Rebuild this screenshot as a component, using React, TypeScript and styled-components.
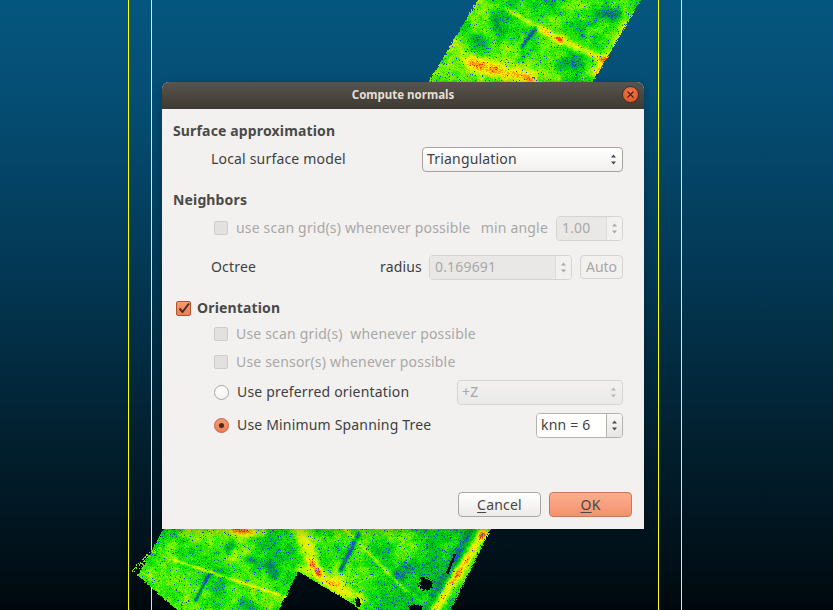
import React, { FC, useMemo } from 'react';
import styled, { createGlobalStyle } from 'styled-components';

const GlobalStyle = createGlobalStyle`
  html, body {
    margin: 0;
    padding: 0;
    height: 100%;
    overflow: hidden;
    background: #000a12;
  }
`;

const Viewport = styled.div`
  position: relative;
  width: 833px;
  height: 610px;
  overflow: hidden;
  background: linear-gradient(to bottom, #05567f 0%, #054d73 17%, #033550 48%, #02202f 72%, #011722 84%, #00080e 100%);
  font-family: 'Noto Sans', 'Open Sans', sans-serif;
  font-size: 14px;
  color: #3c3c3c;
`;

const Scene = styled.svg`
  position: absolute;
  inset: 0;
  display: block;
`;

// point cloud -----------------------------------------------------------------

type Pt = [number, number];
type Band = { a: Pt; b: Pt; w: number; amp: number };

const hash = (x: number, y: number) => {
  const s = Math.sin(x * 127.1 + y * 311.7) * 43758.5453;
  return s - Math.floor(s);
};

const smooth = (x: number, y: number) => {
  const ix = Math.floor(x);
  const iy = Math.floor(y);
  const fx = x - ix;
  const fy = y - iy;
  const u = fx * fx * (3 - 2 * fx);
  const v = fy * fy * (3 - 2 * fy);
  const top = hash(ix, iy) * (1 - u) + hash(ix + 1, iy) * u;
  const bottom = hash(ix, iy + 1) * (1 - u) + hash(ix + 1, iy + 1) * u;
  return top * (1 - v) + bottom * v;
};

const inside = (poly: Pt[], x: number, y: number) => {
  let hit = false;
  for (let i = 0, j = poly.length - 1; i < poly.length; j = i++) {
    const [xi, yi] = poly[i];
    const [xj, yj] = poly[j];
    if (yi > y !== yj > y && x < ((xj - xi) * (y - yi)) / (yj - yi) + xi) hit = !hit;
  }
  return hit;
};

const segDist = (x: number, y: number, a: Pt, b: Pt) => {
  const dx = b[0] - a[0];
  const dy = b[1] - a[1];
  const t = Math.max(0, Math.min(1, ((x - a[0]) * dx + (y - a[1]) * dy) / (dx * dx + dy * dy || 1)));
  return Math.hypot(x - a[0] - t * dx, y - a[1] - t * dy);
};

const palette = ['#1a4cc4', '#058a5a', '#04b030', '#00d414', '#2eea00', '#7cf200', '#c4f400', '#f4ee00', '#ffa400', '#ee4a10'];

const topPoly: Pt[] = [[477, 0], [640, 0], [592, 82], [428, 82]];
const bottomPoly: Pt[] = [
  [163, 529], [150, 552], [137, 575], [177, 610], [278, 610], [298, 571],
  [350, 602], [360, 610], [450, 610], [490, 529],
];

const bands: Band[] = [
  // top sheet
  { a: [505, 8], b: [560, 40], w: 3, amp: 0.24 },
  { a: [560, 40], b: [612, 62], w: 4, amp: 0.28 },
  { a: [470, 62], b: [530, 80], w: 7, amp: 0.32 },
  { a: [625, 28], b: [600, 70], w: 7, amp: 0.24 },
  { a: [475, 40], b: [480, 42], w: 6, amp: -0.22 },
  { a: [600, 14], b: [616, 15], w: 6, amp: -0.3 },
  { a: [522, 46], b: [535, 28], w: 2, amp: -0.35 },
  { a: [560, 64], b: [575, 60], w: 8, amp: -0.18 },
  { a: [495, 20], b: [500, 35], w: 5, amp: -0.18 },
  // bottom sheet
  { a: [482, 535], b: [433, 610], w: 5, amp: 0.42 },
  { a: [470, 530], b: [428, 610], w: 5, amp: -0.24 },
  { a: [312, 564], b: [318, 572], w: 5, amp: 0.46 },
  { a: [300, 568], b: [360, 598], w: 6, amp: 0.24 },
  { a: [300, 532], b: [310, 556], w: 8, amp: 0.26 },
  { a: [235, 529], b: [262, 532], w: 5, amp: 0.34 },
  { a: [175, 560], b: [295, 600], w: 1.6, amp: 0.22 },
  { a: [345, 529], b: [405, 590], w: 2, amp: 0.2 },
  { a: [230, 543], b: [228, 548], w: 6, amp: -0.24 },
  { a: [268, 566], b: [272, 574], w: 6, amp: -0.28 },
  { a: [248, 560], b: [254, 562], w: 5, amp: -0.2 },
  { a: [358, 534], b: [340, 570], w: 2.2, amp: -0.38 },
  { a: [208, 575], b: [195, 600], w: 1.6, amp: -0.38 },
  { a: [245, 602], b: [250, 606], w: 6, amp: -0.28 },
  { a: [412, 560], b: [400, 575], w: 9, amp: -0.16 },
];

const holes: Band[] = [
  { a: [424, 583], b: [426, 584], w: 6, amp: 1 },
  { a: [357, 600], b: [358, 604], w: 2.5, amp: 1 },
  { a: [412, 608], b: [418, 608], w: 4, amp: 1 },
  { a: [454, 555], b: [447, 572], w: 1.3, amp: 1 },
];

const buildCloud = () => {
  const runs: string[] = palette.map(() => '');
  const scan = (from: number, to: number, poly: Pt[]) => {
    for (let y = from; y < to; y++) {
      let start = -1;
      let current = -1;
      for (let x = 125; x <= 650; x++) {
        let bucket = -1;
        const edge = hash(x * 0.7, y * 1.3);
        const holed = holes.some((h) => segDist(x, y, h.a, h.b) < h.w * (0.7 + edge * 0.6));
        if (inside(poly, x + (edge - 0.5) * 2.5, y) && !holed) {
          let v = 0.44 + (smooth(x / 24, y / 24) - 0.5) * 0.3 + (smooth(x / 6, y / 6) - 0.5) * 0.16;
          v += (hash(x, y) - 0.5) * 0.14;
          for (const b of bands) {
            const d = segDist(x, y, b.a, b.b) / b.w;
            if (d < 2.4) v += b.amp * Math.exp(-d * d);
          }
          const speckle = hash(x + 0.37, y - 0.51);
          if (speckle < 0.03 + Math.max(0, 0.42 - v) * 0.7) v = 0.02;
          bucket = Math.max(0, Math.min(palette.length - 1, Math.floor(v * palette.length)));
        }
        if (bucket !== current) {
          if (current >= 0) runs[current] += `M${start} ${y}h${x - start}v1h${start - x}z`;
          start = x;
          current = bucket;
        }
      }
      if (current >= 0) runs[current] += `M${start} ${y}h${651 - start}v1h${start - 651}z`;
    }
  };
  scan(0, 83, topPoly);
  scan(528, 610, bottomPoly);
  // stray points on the left rim
  for (let i = 0; i < 70; i++) {
    const t = i / 70;
    const x = Math.round(132 + 30 * t + (hash(i, 3) - 0.5) * 4);
    const y = Math.round(572 - 24 * Math.sin(t * 1.5) + (hash(i, 9) - 0.5) * 5);
    runs[5] += `M${x} ${y}h1v1h-1z`;
  }
  return runs;
};

const PointCloud: FC = () => {
  const runs = useMemo(buildCloud, []);
  return (
    <Scene width={833} height={610} viewBox="0 0 833 610" shapeRendering="crispEdges">
      {[128, 151, 658, 681].map((x) => (
        <rect key={x} x={x} y={0} width={1} height={610} fill="#ffff00" />
      ))}
      {runs.map((d, i) => (
        <path key={i} d={d} fill={palette[i]} />
      ))}
    </Scene>
  );
};

// dialog ----------------------------------------------------------------------

const Dialog = styled.section`
  position: absolute;
  left: 162px;
  top: 82px;
  width: 482px;
  height: 447px;
  display: flex;
  flex-direction: column;
  border-radius: 7px 7px 0 0;
  background: #f2f1f0;
  box-shadow: 0 2px 10px rgba(0, 0, 0, 0.25);
`;

const TitleBar = styled.header`
  position: relative;
  box-sizing: border-box;
  flex: 0 0 27px;
  display: flex;
  align-items: center;
  justify-content: center;
  padding-bottom: 2px;
  border-radius: 7px 7px 0 0;
  background: linear-gradient(to bottom, #59544b, #3d3a34);
  color: #e4dfd6;
  font-size: 11.5px;
  font-weight: 700;
`;

const CloseButton = styled.button`
  position: absolute;
  right: 5px;
  top: 4px;
  width: 17px;
  height: 17px;
  padding: 0;
  display: flex;
  align-items: center;
  justify-content: center;
  border: 1px solid #3a2f28;
  border-radius: 50%;
  background: radial-gradient(circle at 50% 35%, #f2794a, #df4f1e);
`;

const Body = styled.div`
  flex: 1;
  display: flex;
  flex-direction: column;
  padding: 9px 12px 12px 11px;
`;

const Row = styled.div<{ $h?: number; $top?: number; $indent?: number }>`
  display: flex;
  align-items: center;
  height: ${({ $h }) => $h ?? 30}px;
  margin-top: ${({ $top }) => $top ?? 0}px;
  padding-left: ${({ $indent }) => $indent ?? 0}px;
  padding-right: 9px;
  flex: 0 0 auto;
`;

const Heading = styled.h3`
  margin: 0 0 2px;
  font-size: 14px;
  font-weight: 700;
  letter-spacing: 0.15px;
  color: #4a4a48;
`;

const Label = styled.span<{ $off?: boolean; $gap?: number }>`
  color: ${({ $off }) => ($off ? '#a9a8a6' : '#3f3f3f')};
  margin: 0 ${({ $gap }) => $gap ?? 0}px 2px 0;
  white-space: pre;
  letter-spacing: 0.18px;
`;

const Push = styled.div`
  margin-left: auto;
  display: flex;
  align-items: center;
`;

const CheckBox = styled.span<{ $on?: boolean; $gap?: number }>`
  flex: none;
  box-sizing: border-box;
  width: ${({ $on }) => ($on ? 15 : 14)}px;
  height: ${({ $on }) => ($on ? 15 : 14)}px;
  margin-left: ${({ $on }) => ($on ? 3 : 0)}px;
  margin-right: ${({ $gap }) => $gap ?? 8}px;
  display: flex;
  align-items: center;
  justify-content: center;
  border-radius: 2px;
  border: 1px solid ${({ $on }) => ($on ? '#b0532e' : '#cfcdca')};
  background: ${({ $on }) => ($on ? 'linear-gradient(to bottom, #f59a75, #ea7f55)' : '#e3e1df')};
`;

const Radio = styled.span<{ $on?: boolean }>`
  flex: none;
  box-sizing: border-box;
  width: 15px;
  height: 15px;
  margin-right: 8px;
  display: flex;
  align-items: center;
  justify-content: center;
  border-radius: 50%;
  border: 1px solid ${({ $on }) => ($on ? '#c4623a' : '#aaa7a2')};
  background: ${({ $on }) => ($on ? 'linear-gradient(to bottom, #f59a75, #ea7f55)' : 'linear-gradient(to bottom, #ffffff, #f4f3f2)')};
  &::after {
    content: '';
    display: ${({ $on }) => ($on ? 'block' : 'none')};
    width: 5px;
    height: 5px;
    border-radius: 50%;
    background: #4a2a1c;
  }
`;

const Combo = styled.div<{ $w: number; $off?: boolean }>`
  box-sizing: border-box;
  width: ${({ $w }) => $w}px;
  height: 25px;
  display: flex;
  align-items: center;
  justify-content: space-between;
  padding: 0 4px;
  border-radius: 4px;
  border: 1px solid ${({ $off }) => ($off ? '#d6d4d1' : '#a7a49e')};
  background: ${({ $off }) => ($off ? 'linear-gradient(to bottom, #f2f1f0, #eaeae8)' : 'linear-gradient(to bottom, #ffffff, #f1f0ee)')};
  color: ${({ $off }) => ($off ? '#a9a8a6' : '#3f3f3f')};
  letter-spacing: 0.18px;
`;

const ComboText = styled.span`
  margin-bottom: 2px;
`;

const Spin = styled.div<{ $w: number; $off?: boolean }>`
  box-sizing: border-box;
  width: ${({ $w }) => $w}px;
  height: 25px;
  display: flex;
  align-items: stretch;
  overflow: hidden;
  border-radius: 4px;
  border: 1px solid ${({ $off }) => ($off ? '#d6d4d1' : '#b5b2ac')};
  color: ${({ $off }) => ($off ? '#a9a8a6' : '#3f3f3f')};
`;

const SpinField = styled.div<{ $off?: boolean }>`
  flex: 1;
  display: flex;
  align-items: center;
  padding: 0 0 2px ${({ $off }) => ($off ? 5 : 4)}px;
  background: ${({ $off }) => ($off ? '#e9e8e6' : '#ffffff')};
  letter-spacing: 0.18px;
`;

const SpinArrows = styled.div<{ $off?: boolean }>`
  flex: 0 0 15px;
  display: flex;
  align-items: center;
  justify-content: center;
  border-left: 1px solid ${({ $off }) => ($off ? '#dddbd8' : '#b5b2ac')};
  background: ${({ $off }) => ($off ? '#f2f1f0' : 'linear-gradient(to bottom, #f8f7f6, #e8e6e4)')};
`;

const AutoButton = styled.button`
  box-sizing: border-box;
  width: 43px;
  height: 24px;
  margin-left: 8px;
  padding: 0 0 2px;
  border: 1px solid #d6d4d1;
  border-radius: 4px;
  background: #f2f1f0;
  color: #a9a8a6;
  font: inherit;
`;

const Footer = styled.footer`
  margin-top: auto;
  display: flex;
  justify-content: flex-end;
  gap: 8px;
`;

const PushButton = styled.button<{ $primary?: boolean }>`
  box-sizing: border-box;
  width: 83px;
  height: 25px;
  padding: 0;
  border-radius: 4px;
  border: 1px solid ${({ $primary }) => ($primary ? '#c9765a' : '#a9a6a0')};
  background: ${({ $primary }) =>
    $primary ? 'linear-gradient(to bottom, #fcae8e, #f5916c)' : 'linear-gradient(to bottom, #ffffff, #ecebe9)'};
  color: #4a4642;
  font: inherit;
  letter-spacing: 0.2px;
  u {
    text-underline-offset: 2px;
  }
`;

const Arrows: FC<{ color: string }> = ({ color }) => (
  <svg width="9" height="15" viewBox="0 0 9 15">
    <path d="M4.5 2.5 L7 5.5 H2 Z M2 9.5 H7 L4.5 12.5 Z" fill={color} />
  </svg>
);

const CloseIcon: FC = () => (
  <svg width="9" height="9" viewBox="0 0 9 9">
    <path d="M1.5 1.5 L7.5 7.5 M7.5 1.5 L1.5 7.5" stroke="#4a2212" strokeWidth="1.3" fill="none" />
  </svg>
);

const Tick: FC = () => (
  <svg width="13" height="13" viewBox="0 0 13 13">
    <path d="M2.5 6.5 L5.5 10 L12 1.5" stroke="#4e2c1e" strokeWidth="2" fill="none" />
  </svg>
);

const App: FC = () => {
  return (
    <Viewport>
      <GlobalStyle />
      <PointCloud />
      <Dialog>
        <TitleBar>
          Compute normals
          <CloseButton aria-label="Close">
            <CloseIcon />
          </CloseButton>
        </TitleBar>
        <Body>
          <Row $h={26}>
            <Heading>Surface approximation</Heading>
          </Row>
          <Row $indent={38}>
            <Label>Local surface model</Label>
            <Push>
              <Combo $w={201}>
                <ComboText>Triangulation</ComboText>
                <Arrows color="#4a4a4a" />
              </Combo>
            </Push>
          </Row>
          <Row $h={26} $top={13}>
            <Heading>Neighbors</Heading>
          </Row>
          <Row $indent={41}>
            <CheckBox />
            <Label $off>use scan grid(s) whenever possible</Label>
            <Push>
              <Label $off $gap={8}>min angle</Label>
              <Spin $w={67} $off>
                <SpinField $off>1.00</SpinField>
                <SpinArrows $off>
                  <Arrows color="#a9a8a6" />
                </SpinArrows>
              </Spin>
            </Push>
          </Row>
          <Row $top={9} $indent={38}>
            <Label>Octree</Label>
            <Push>
              <Label $gap={7}>radius</Label>
              <Spin $w={143} $off>
                <SpinField $off>0.169691</SpinField>
                <SpinArrows $off>
                  <Arrows color="#a9a8a6" />
                </SpinArrows>
              </Spin>
              <AutoButton disabled>Auto</AutoButton>
            </Push>
          </Row>
          <Row $h={26} $top={13}>
            <CheckBox $on $gap={6}>
              <Tick />
            </CheckBox>
            <Heading>Orientation</Heading>
          </Row>
          <Row $h={26} $indent={41}>
            <CheckBox />
            <Label $off>Use scan grid(s)  whenever possible</Label>
          </Row>
          <Row $h={26} $top={2} $indent={41}>
            <CheckBox />
            <Label $off>Use sensor(s) whenever possible</Label>
          </Row>
          <Row $top={2} $indent={41}>
            <Radio />
            <Label>Use preferred orientation</Label>
            <Push>
              <Combo $w={166} $off>
                <ComboText>+Z</ComboText>
                <Arrows color="#b8b7b5" />
              </Combo>
            </Push>
          </Row>
          <Row $top={3} $indent={41}>
            <Radio $on />
            <Label>Use Minimum Spanning Tree</Label>
            <Push>
              <Spin $w={87}>
                <SpinField>knn = 6</SpinField>
                <SpinArrows>
                  <Arrows color="#4a4a4a" />
                </SpinArrows>
              </Spin>
            </Push>
          </Row>
          <Footer>
            <PushButton>
              <u>C</u>ancel
            </PushButton>
            <PushButton $primary>
              <u>O</u>K
            </PushButton>
          </Footer>
        </Body>
      </Dialog>
    </Viewport>
  );
};

export default App;
